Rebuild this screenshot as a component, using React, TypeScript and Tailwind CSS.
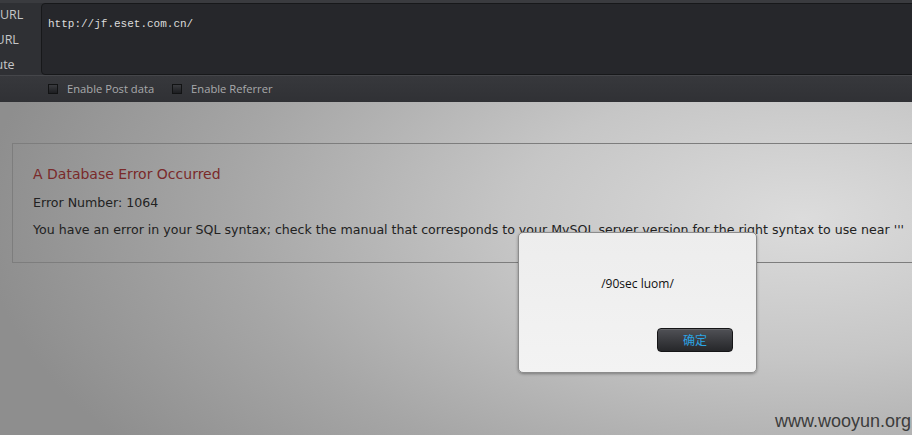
import React from 'react';

const uiFont = { fontFamily: '"Open Sans", "Noto Sans", sans-serif' };

function Checkbox({ label }: { label: string }) {
  return (
    <label className="flex items-center gap-[9px] text-[11.2px] text-[#a9aaac]">
      <span className="w-[10px] h-[10px] border border-[#121314] bg-gradient-to-b from-[#3a3b3f] to-[#1d1e21]" />
      {label}
    </label>
  );
}

export default function App() {
  return (
    <div className="relative w-[912px] h-[435px] overflow-hidden" style={uiFont}>
      {/* hackbar */}
      <div className="h-[102px] bg-[#2f3034] border-t-[3px] border-[#3a3b3f] flex flex-col">
        <div className="flex h-[72px]">
          <div className="w-[41px] shrink-0 overflow-hidden">
            <div className="-ml-[32px] flex flex-col -mt-[1px] text-[12.5px] leading-[25px] text-[#c5c6c8] whitespace-nowrap">
              <span>Load URL</span>
              <span className="ml-[-1px]">Split URL</span>
              <span className="ml-[1px]">Execute</span>
            </div>
          </div>
          <div className="flex-1 -mr-[10px] bg-[#26272b] border border-[#17181a] rounded-[4px] px-[6px] pt-[5px]">
            <span className="text-[11px] text-[#dcdcdc]" style={{ fontFamily: '"Liberation Mono", monospace' }}>
              http://jf.eset.com.cn/
            </span>
          </div>
        </div>
        <div className="flex-1 bg-gradient-to-b from-[#37383c] to-[#303135] border-t border-[#45464a] flex items-center gap-[18px] pl-[48px] pt-[1px]">
          <Checkbox label="Enable Post data" />
          <Checkbox label="Enable Referrer" />
        </div>
      </div>

      {/* page */}
      <div className="h-[333px] bg-[radial-gradient(ellipse_90%_120%_at_88%_35%,#dcdcdc_0%,#c6c6c6_35%,#a6a6a6_70%,#8e8e8e_100%)] pt-[41px] pl-[12px]">
        <div className="w-[960px] h-[120px] border border-[#7d7d7d] pl-[20px] pt-[20px]" style={{ fontFamily: '"DejaVu Sans", Verdana, sans-serif' }}>
          <h1 className="text-[14px] text-[#7a2a2a] leading-[20px]">A Database Error Occurred</h1>
          <p className="text-[12.6px] text-[#222] mt-[11px] leading-[16px]">Error Number: 1064</p>
          <p className="text-[12.6px] text-[#222] mt-[11px] leading-[16px] whitespace-nowrap">
            You have an error in your SQL syntax; check the manual that corresponds to your MySQL server version for the right syntax to use near '''
          </p>
        </div>
      </div>

      {/* alert dialog */}
      <div className="absolute left-[518px] top-[232px] w-[239px] h-[141px] rounded-[5px] border border-[#8c8c8c] bg-gradient-to-b from-[#ededed] to-[#f3f3f3] shadow-[0_1px_3px_rgba(0,0,0,0.35)] flex flex-col">
        <div className="text-center text-[12px] text-[#111] mt-[42px]">/90sec luom/</div>
        <div className="flex justify-end mt-auto mb-[20px] mr-[23px]">
          <button
            className="w-[76px] h-[24px] rounded-[4px] border border-[#151517] bg-gradient-to-b from-[#505156] to-[#26272a] text-[12px] text-[#2ba4e4] shadow-[inset_0_1px_0_rgba(255,255,255,0.12)]"
            style={{ fontFamily: '"Noto Sans CJK SC", sans-serif' }}
          >
            确定
          </button>
        </div>
      </div>

      {/* watermark */}
      <div className="absolute right-[1px] bottom-[0px] text-[18px] text-[#3c3c3c]" style={{ fontFamily: '"Liberation Sans", Arial, sans-serif' }}>
        www.wooyun.org
      </div>
    </div>
  );
}
